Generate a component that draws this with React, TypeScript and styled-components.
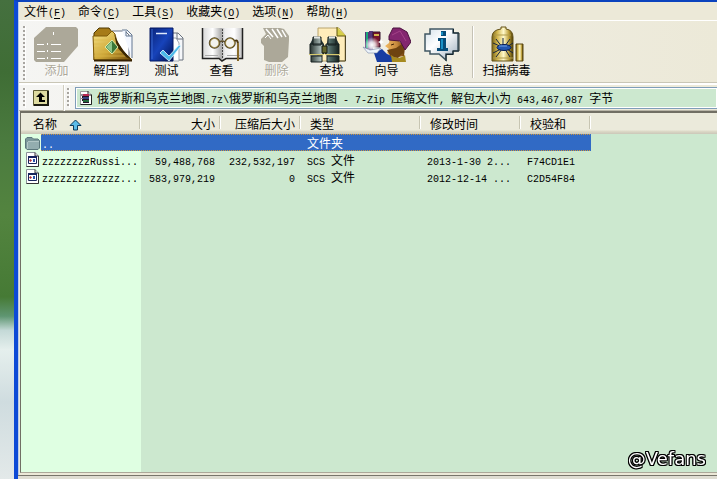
import React, { Fragment } from "react";
import styled, { createGlobalStyle, css } from "styled-components";

const GlobalStyle = createGlobalStyle`
  * { box-sizing: border-box; }
  html, body { margin: 0; height: 100%; overflow: hidden; }
  body {
    font: 12px/16px "Noto Sans CJK SC", sans-serif;
    color: #000;
    cursor: default;
  }
  button { font: inherit; color: inherit; background: none; border: 0; padding: 0; margin: 0; }
`;

/* Half-width characters take half the width of a full-width one. */
const HalfWidth = styled.span`
  font-family: "Liberation Mono", monospace;
  font-size: 10px;
  line-height: 10px;
  white-space: pre;
`;

function Mixed({ text }: { text: string }) {
  return (
    <>
      {text.split(/([\x20-\x7e]+)/).map((part, i) =>
        i % 2 ? <HalfWidth key={i}>{part}</HalfWidth> : <Fragment key={i}>{part}</Fragment>
      )}
    </>
  );
}

const Screen = styled.div`
  display: flex;
  height: 100vh;
  background: linear-gradient(
    to bottom,
    #45703f 0,
    #3f6d35 15%,
    #4b7b3f 30%,
    #53843f 45%,
    #467a35 62%,
    #5f9672 66%,
    #c4d9d7 69%,
    #e5efed 73%,
    #cfdcdf 84%,
    #e3e9e9 100%
  );
`;

const Window = styled.main`
  flex: 1;
  min-width: 0;
  margin-left: 14px;
  display: flex;
  flex-direction: column;
  background: #ece9d8;
  border-left: 4px solid #0d4ad6;
  border-top: 2px solid #0b43be;
  box-shadow: inset 1px 0 #b8cbea;
`;

const MenuBar = styled.nav`
  display: flex;
  gap: 12px;
  height: 19px;
  padding: 1px 5px 2px;
  margin-left: 1px;
  border-bottom: 1px solid #fff;
`;

const MenuItem = styled.button`
  white-space: nowrap;
  line-height: 16px;
`;

const Key = styled.u`
  text-underline-offset: 2px;
`;

const Toolbar = styled.div`
  display: flex;
  align-items: flex-start;
  height: 62px;
  padding: 5px 4px 0;
  margin-left: 1px;
  background: linear-gradient(to right, #f5f5f3, #f0eee4 50%, #ece9d8);
  border-bottom: 1px solid #c9c6b6;
`;

const Grip = styled.span<{ $height: number }>`
  width: 3px;
  height: ${(p) => p.$height}px;
  flex: none;
  background: repeating-linear-gradient(to bottom, #a8a5a0 0 2px, transparent 2px 4px);
  border-right: 1px solid #fff;
`;

const Tools = styled.div`
  display: flex;
  margin-left: 3px;
`;

const ToolButton = styled.button<{ $wide?: boolean }>`
  width: ${(p) => (p.$wide ? 59 : 55)}px;
  display: flex;
  flex-direction: column;
  align-items: center;
  white-space: nowrap;
  line-height: 14px;
  &:disabled {
    color: #aca899;
    text-shadow: 1px 1px #fff;
  }
`;

const Separator = styled.span`
  width: 2px;
  height: 52px;
  margin: 0 3px;
  background: #c5c2b5;
  border-right: 1px solid #fff;
`;

const AddressBar = styled.div`
  display: flex;
  align-items: center;
  height: 28px;
  padding-left: 4px;
  margin-left: 1px;
  background: linear-gradient(to right, #f5f5f3, #ece9d8);
  border-top: 2px solid #fff;
  border-bottom: 1px solid #b9b6a8;
`;

const UpButton = styled.button`
  width: 16px;
  height: 16px;
  margin: 0 14px 0 7px;
  svg { display: block; }
`;

const BarEdge = styled.span`
  width: 2px;
  height: 26px;
  margin-right: 2px;
  background: #d1cec0;
  border-right: 1px solid #fff;
`;

const Address = styled.button`
  flex: 1;
  min-width: 0;
  display: flex;
  align-items: center;
  gap: 4px;
  height: 22px;
  margin-left: 5px;
  padding-left: 3px;
  border: 1px solid #7f9db9;
  border-right: 0;
  background: #cce8cf;
  box-shadow: inset 0 0 0 1px #fff;
  text-align: left;
  white-space: nowrap;
  svg { flex: none; }
`;

const FileList = styled.section`
  flex: 1;
  min-height: 0;
  margin: 0 0 2px 2px;
  border: 1px solid #716f64;
  border-width: 2px 0 1px 1px;
  border-bottom-color: #aca899;
  background: linear-gradient(to right, #dfffe2 120px, #cce8cf 120px);
`;

const Status = styled.footer`
  height: 4px;
  border-top: 1px solid #77756a;
  background: #dfddd2;
`;

const Table = styled.table`
  width: 100%;
  table-layout: fixed;
  border-spacing: 0;
`;

const Column = styled.col<{ $width?: number }>`
  ${(p) => p.$width && css`width: ${p.$width}px;`}
`;

const HeaderRow = styled.tr`
  height: 21px;
  background: linear-gradient(to bottom, #ebeadb 17px, #dedbc9 18px, #cbc7b8);
`;

const HeaderCell = styled.th<{ $right?: boolean; $last?: boolean; $first?: boolean }>`
  padding: 0 ${(p) => (p.$right ? 6 : 2)}px 0 ${(p) => (p.$right ? 2 : p.$first ? 12 : 9)}px;
  font-weight: 400;
  line-height: 18px;
  white-space: nowrap;
  text-align: ${(p) => (p.$right ? "right" : "left")};
  ${(p) =>
    !p.$last &&
    css`
      background: linear-gradient(#c7c5b2, #c7c5b2) right 1px top 3px / 1px 13px no-repeat,
        linear-gradient(#fff, #fff) right 0 top 3px / 1px 13px no-repeat;
    `}
  svg { margin-left: 12px; vertical-align: -2px; }
`;

const dots = "repeating-linear-gradient(to right, #ce953a 0 1px, #316ac5 1px 2px)";

const selectedCell = css`
  color: #fff;
  background: ${dots} left top / 100% 1px no-repeat, ${dots} left bottom / 100% 1px no-repeat, #316ac5;
`;

const Row = styled.tr`
  height: 17px;
`;

const Cell = styled.td<{ $right?: boolean; $selected?: boolean }>`
  padding: 0 6px;
  height: 17px;
  line-height: 17px;
  white-space: nowrap;
  text-align: ${(p) => (p.$right ? "right" : "left")};
  ${(p) => p.$selected && selectedCell}
`;

const NameCell = styled.td`
  padding: 0;
`;

const NameBox = styled.div`
  display: flex;
  height: 17px;
  align-items: center;
  svg { flex: none; margin: 0 1px 0 4px; }
`;

const NameText = styled.span<{ $selected?: boolean }>`
  flex: 1;
  height: 17px;
  line-height: 17px;
  padding-left: 1px;
  overflow: hidden;
  white-space: nowrap;
  ${(p) => p.$selected && selectedCell}
`;

const Watermark = styled.span`
  position: fixed;
  right: 11px;
  bottom: 10px;
  color: #fff;
  font: 18px/20px "DejaVu Sans", sans-serif;
  text-shadow: 1px 0 #000, -1px 0 #000, 0 1px #000, 0 -1px #000, 1px 1px #000, -1px -1px #000,
    1px -1px #000, -1px 1px #000;
`;

const Art = ({ children }: { children: React.ReactNode }) => (
  <svg width="49" height="37" viewBox="0 0 49 37" aria-hidden="true">
    {children}
  </svg>
);

const AddIcon = () => (
  <Art>
    <path d="M14 1H44L46 3V20L39 28 32 36H4L2 34V12Z" fill="#aca899" />
    <path d="M5 18.500h7M19 18.500h10M5 25.500h8M19 25.500h10M5 32.500h8M19 32.500h10" stroke="#fff" />
    <path d="M15 17h1v2h-1zM15 24h1v2h-1zM15 31h1v2h-1zM21 6h1v3h-1z" fill="#fff" />
  </Art>
);

const ExtractIcon = () => (
  <Art>
    <defs>
      <linearGradient id="folder" x2="1" y2="1">
        <stop offset="0" stopColor="#f8e58a" />
        <stop offset=".55" stopColor="#cda638" />
        <stop offset="1" stopColor="#6d4808" />
      </linearGradient>
    </defs>
    <path d="M7 7 12 2H22L25 6H37V34H7Z" fill="#a67b18" stroke="#4f3900" />
    <path d="M25 5H38L42 9V32H25Z" fill="#fff" stroke="#667084" />
    <path d="M35 4H40L45 9V32M39 5v5h6" fill="#f3f7ff" stroke="#637691" />
    <path d="M6 10H20L25 5 28 8 30 16 35 24 45 34H7Z" fill="url(#folder)" stroke="#7f5a08" />
    <path d="M7 14h20M7 18h22M7 22h24M7 26h28M7 30h32" stroke="#ddb94b" opacity=".7" />
    <path d="M27 7C30 16 36 25 45 34L39 31 30 21Z" fill="#3b2703" />
    <path d="M7 34.500H45" stroke="#352000" strokeWidth="2" />
    <path d="M25 14 31 21 25 28 18 21Z" fill="#397738" stroke="#dce9a7" />
    <path d="M25 15v12l-6-6Z" fill="#8cc48b" />
  </Art>
);

const TestIcon = () => (
  <Art>
    <defs>
      <linearGradient id="book" x2="1" y2="1">
        <stop offset="0" stopColor="#0a2378" />
        <stop offset=".5" stopColor="#1743ba" />
        <stop offset="1" stopColor="#001050" />
      </linearGradient>
    </defs>
    <path d="M24 7H36L41 12V34H24Z" fill="#f5f7fa" stroke="#68717d" />
    <path d="M23 12H34L37 17V35H23Z" fill="#fff" stroke="#a0a8b4" />
    <path d="M35 7v6h6" fill="none" stroke="#68717d" />
    <path d="M8 2H31V35H8Z" fill="url(#book)" stroke="#041862" />
    <path d="M10 3v30" stroke="#3968d1" />
    <path d="M14 7.500h11" stroke="#dfe9fc" strokeWidth="1.500" />
    <path d="m18 27 3-3 6 6L37 19l2 1-12 15Z" fill="#4bb9e9" stroke="#e8faff" strokeWidth=".8" />
  </Art>
);

const ViewIcon = () => (
  <Art>
    <defs>
      <linearGradient id="page">
        <stop offset="0" stopColor="#d9d9d9" />
        <stop offset=".25" stopColor="#fff" />
        <stop offset=".47" stopColor="#aaa" />
        <stop offset=".56" stopColor="#ededed" />
        <stop offset=".8" stopColor="#fff" />
        <stop offset="1" stopColor="#c4c4c4" />
      </linearGradient>
    </defs>
    <path d="M6 2H45V32H28L25 34 22 32H6Z" fill="url(#page)" />
    <path d="M5.500 2V32.500H22L25 35 29 32.500H45.500V2" fill="none" stroke="#222" strokeWidth="1.500" />
    <path d="M25.500 3v30" stroke="#444" strokeDasharray="2 1" />
    <path d="M8 29.500h13M30 29.500h13" stroke="#aaa" />
    <path d="M23 16q2-2 5 0" fill="none" stroke="#5d4e29" strokeWidth="1.500" />
    <circle cx="17.500" cy="17" r="5" fill="#f2f2ed" stroke="#4c4120" strokeWidth="1.500" />
    <circle cx="33" cy="17" r="5" fill="#f2f2ed" stroke="#4c4120" strokeWidth="1.500" />
    <circle cx="17.500" cy="17" r="4.500" fill="none" stroke="#c0a554" strokeWidth=".7" />
    <circle cx="33" cy="17" r="4.500" fill="none" stroke="#c0a554" strokeWidth=".7" />
    <path d="M38 15q3-2 3 4v16" fill="none" stroke="#49340c" strokeWidth="2" />
    <path d="M41 17v18" stroke="#c9a34c" />
  </Art>
);

const DeleteIcon = () => (
  <Art>
    <path d="M9 13 14 8 11 2H28L32 3 37 10 37 14 36 31 30 36H17L12 34V20L9 17Z" fill="#aca899" />
    <path d="m14 3 7 8M20 3l6 9M25 3l5 8M30 4l4 7" stroke="#fff" strokeWidth="1.500" />
    <path d="M13 12l3-3 3 4" fill="none" stroke="#fff" />
  </Art>
);

const FindIcon = () => (
  <Art>
    <defs>
      <linearGradient id="barrel">
        <stop offset="0" stopColor="#27332f" />
        <stop offset=".4" stopColor="#b5c6c3" />
        <stop offset=".7" stopColor="#4e6864" />
        <stop offset="1" stopColor="#14201e" />
      </linearGradient>
    </defs>
    <path d="M11 2H32L38 9V35H11Z" fill="#ffedbb" stroke="#b9a46e" />
    <path d="M30 1v9h9" fill="#d6ce49" stroke="#605710" />
    <path d="M38.500 10v25h-9" fill="none" stroke="#514829" />
    <path d="M6 12h7l4 6v10H3V18ZM21 12h8l3 6v10H18Z" fill="#293838" />
    <path d="M6 11h8v8H6zM21 11h8v8h-8zM3 18h13v11H3zM19 18h13v11H19zM4 30h11v6H4zM20 30h12v6H20z" fill="url(#barrel)" stroke="#172020" />
    <path d="M7 11.500h6M22 11.500h6" stroke="#e2e6e4" strokeWidth="2" />
    <path d="M2 28.500h15M18 28.500h15" stroke="#d6ca6e" />
    <path d="M15 20h5v7h-5z" fill="#65662b" stroke="#171b16" />
  </Art>
);

const WizardIcon = () => (
  <Art>
    <defs>
      <radialGradient id="glow">
        <stop offset="0" stopColor="#fff" />
        <stop offset=".4" stopColor="#fff" stopOpacity=".8" />
        <stop offset="1" stopColor="#fff" stopOpacity="0" />
      </radialGradient>
      <linearGradient id="face">
        <stop offset="0" stopColor="#f4ba61" />
        <stop offset=".6" stopColor="#c5883c" />
        <stop offset="1" stopColor="#673806" />
      </linearGradient>
    </defs>
    <path d="M3 6h4v17H3zM7 5h4v19H7z" fill="#563578" />
    <path d="M4 6h2v16H4z" fill="#1aa77a" />
    <path d="M11 6h7v15h-7z" fill="#77142c" stroke="#33122c" />
    <path d="M12 9h5" stroke="#d4b54e" strokeWidth="2" />
    <circle cx="10" cy="19" r="8" fill="url(#glow)" />
    <path d="M12 27 20 23 25 28 31 30V36H15Z" fill="#173da2" />
    <path d="M1 21 8 24 19 22 15 27H6Z" fill="#edf4fb" stroke="#7b8aa7" strokeWidth=".6" />
    <path d="M28 12 36 14 43 21 42 30 31 32 25 27 27 23 23 20 27 17Z" fill="url(#face)" />
    <path d="m25 24 9-2 6-4 2 8-6 6-7-1Z" fill="#6e4310" />
    <path d="M29 29q7 6 14 0l1 7H30Z" fill="#a68a20" />
    <path d="M27 10 31 2 38 2 45 6 49 16 43 24 38 15 27 14Z" fill="#83266f" stroke="#4b123f" />
    <path d="m30 9 8-4 6 10" fill="none" stroke="#a44288" />
    <path d="M29 19l3-1" stroke="#402306" />
    <path d="m18 15 1-2 1 2 2 1-2 1-1 2-1-2-2-1Z" fill="#fff" />
  </Art>
);

const InfoIcon = () => (
  <Art>
    <defs>
      <linearGradient id="bubble" x2="1" y2="1">
        <stop offset="0" stopColor="#d3e0e9" />
        <stop offset=".4" stopColor="#fff" />
        <stop offset="1" stopColor="#9badbe" />
      </linearGradient>
    </defs>
    <path d="M13 3H36V7H41V25H36V28H29V34L22 28H13V25H8V8H13Z" fill="url(#bubble)" stroke="#405763" strokeWidth="1.500" />
    <path d="M36.500 3v4H42v18h-6v3.500h-7V35" fill="none" stroke="#14242d" />
    <path d="M24 5h5v5h-5zM21 12h8v10h2v3H20v-3h3v-7h-2z" fill="#084d79" />
    <path d="M24 6h2v3h-2zM24 13h2v10h-2z" fill="#1b91c6" />
  </Art>
);

const VirusIcon = () => (
  <Art>
    <defs>
      <linearGradient id="tank">
        <stop offset="0" stopColor="#7a6518" />
        <stop offset=".25" stopColor="#d2b64d" />
        <stop offset=".55" stopColor="#fff9cb" />
        <stop offset=".8" stopColor="#bfa13c" />
        <stop offset="1" stopColor="#493900" />
      </linearGradient>
    </defs>
    <path d="M19 3V1h5v2q7 1 7 8v24H10V11q0-7 9-8Z" fill="url(#tank)" stroke="#655319" />
    <path d="M34 18h7v17h-7z" fill="url(#tank)" stroke="#5a4610" />
    <path d="M12 9h17M11 32h20" stroke="#b19c4c" />
    <path d="m14 13 6 8M21 12v9M28 13l-5 7M11 17l9 4M31 17l-6 4M11 27l8-4M14 31l6-8M28 31l-5-8M31 27l-6-4" stroke="#15233f" />
    <ellipse cx="22" cy="21.500" rx="7" ry="3" fill="#2456af" stroke="#071c54" />
    <path d="M17 20h8" stroke="#72a1e5" />
  </Art>
);

const ArchiveIcon = () => (
  <svg width="14" height="16" viewBox="0 0 14 16" aria-hidden="true">
    <path d="M1.500 1.500H9L12.500 5V14.500H1.500Z" fill="#fff" stroke="#999" />
    <path d="M12.500 5v9.500h-11M9 1v4h4" fill="none" stroke="#222" />
    <path d="M4 4h6v2H4z" fill="#b82852" />
    <path d="M4 7h6v2H4z" fill="#34437e" />
    <path d="M4 10h6v2H4z" fill="#256b3d" />
    <path d="M3 4v2l1 1-1 1v1l1 1-1 1M4 6.500h6M4 9.500h6M4 12.500h6" fill="none" stroke="#241326" />
  </svg>
);

const UpIcon = () => (
  <svg width="16" height="16" viewBox="0 0 16 16" aria-hidden="true">
    <path d="M.5.5h15v15H.5Z" fill="#dedba0" stroke="#5c5a34" />
    <path d="M1 15h14V1" fill="none" stroke="#1b1b10" strokeWidth="2" />
    <path d="M7.500 2.500 12 7H9v3h3v2H6V7H3Z" fill="#000" />
  </svg>
);

const SortIcon = () => (
  <svg width="13" height="12" viewBox="0 0 13 12" aria-label="升序" role="img">
    <path d="M6.500 1 12 6.500H8.500V11h-4V6.500H1Z" fill="#5bbce8" stroke="#0b3a5c" />
  </svg>
);

const FolderIcon = () => (
  <svg width="15" height="16" viewBox="0 0 15 16" aria-hidden="true">
    <path d="M.5 4 2 2.500h5L8.500 4H13l1.500 1.500V13L13 14.500H2L.5 13Z" fill="#7b979a" stroke="#5c777c" />
    <path d="M3 6.500h11V13l-1 1H3Z" fill="#93adaf" />
    <path d="M3 6.500h11M2.500 7v7" stroke="#b0c5c5" />
  </svg>
);

const ScsIcon = () => (
  <svg width="15" height="16" viewBox="0 0 15 16" aria-hidden="true">
    <path d="M1.500.5H10L13.500 4v10.500h-12Z" fill="#fff" stroke="#8b9399" />
    <path d="M10 .5V4h3.500v10.500h-12" fill="none" stroke="#333" />
    <path d="M3.500 4.500h8v7h-8Z" fill="#fff" stroke="#17245c" />
    <path d="M3 4h9v2H3Z" fill="#17245c" />
    <path d="m5.500 7 1.500 1.500L5.500 10 4 8.500Z" fill="#b0303d" />
    <path d="M8 7h2v3H8Z" fill="#2b55aa" />
  </svg>
);

const menus = [
  ["文件", "F"],
  ["命令", "C"],
  ["工具", "S"],
  ["收藏夹", "O"],
  ["选项", "N"],
  ["帮助", "H"],
];

const tools = [
  { label: "添加", Icon: AddIcon, disabled: true },
  { label: "解压到", Icon: ExtractIcon },
  { label: "测试", Icon: TestIcon },
  { label: "查看", Icon: ViewIcon },
  { label: "删除", Icon: DeleteIcon, disabled: true },
  { label: "查找", Icon: FindIcon },
  { label: "向导", Icon: WizardIcon },
  { label: "信息", Icon: InfoIcon },
];

const columns = [
  { label: "名称", width: 120 },
  { label: "大小", width: 80, right: true },
  { label: "压缩后大小", width: 80, right: true },
  { label: "类型", width: 120 },
  { label: "修改时间", width: 100 },
  { label: "校验和", width: 70 },
];

const files = [
  { name: "..", cells: ["", "", "文件夹", "", ""], folder: true, selected: true },
  { name: "zzzzzzzzRussi...", cells: ["59,488,768", "232,532,197", "SCS 文件", "2013-1-30 2...", "F74CD1E1"] },
  { name: "zzzzzzzzzzzzz...", cells: ["583,979,219", "0", "SCS 文件", "2012-12-14 ...", "C2D54F84"] },
];

export default function App() {
  return (
    <>
      <GlobalStyle />
      <Screen>
        <Window>
          <MenuBar>
            {menus.map(([label, key]) => (
              <MenuItem key={key}>
                {label}
                <HalfWidth>
                  (<Key>{key}</Key>)
                </HalfWidth>
              </MenuItem>
            ))}
          </MenuBar>
          <Toolbar>
            <Grip $height={54} />
            <Tools>
              {tools.map(({ label, Icon, disabled }) => (
                <ToolButton key={label} disabled={disabled}>
                  <Icon />
                  {label}
                </ToolButton>
              ))}
              <Separator />
              <ToolButton $wide>
                <VirusIcon />
                扫描病毒
              </ToolButton>
            </Tools>
          </Toolbar>
          <AddressBar>
            <Grip $height={20} />
            <UpButton aria-label="向上">
              <UpIcon />
            </UpButton>
            <BarEdge />
            <Grip $height={20} />
            <Address aria-haspopup="listbox">
              <ArchiveIcon />
              <span>
                <Mixed text="俄罗斯和乌克兰地图.7z\俄罗斯和乌克兰地图 - 7-Zip 压缩文件, 解包大小为 643,467,987 字节" />
              </span>
            </Address>
          </AddressBar>
          <FileList>
            <Table>
              <colgroup>
                {columns.map((c) => (
                  <Column key={c.label} $width={c.width} />
                ))}
                <Column />
              </colgroup>
              <thead>
                <HeaderRow>
                  {columns.map((c, i) => (
                    <HeaderCell key={c.label} $right={c.right} $first={i === 0}>
                      {c.label}
                      {i === 0 && <SortIcon />}
                    </HeaderCell>
                  ))}
                  <HeaderCell $last />
                </HeaderRow>
              </thead>
              <tbody>
                {files.map((f) => (
                  <Row key={f.name}>
                    <NameCell>
                      <NameBox>
                        {f.folder ? <FolderIcon /> : <ScsIcon />}
                        <NameText $selected={f.selected}>
                          <Mixed text={f.name} />
                        </NameText>
                      </NameBox>
                    </NameCell>
                    {f.cells.map((text, i) => (
                      <Cell key={i} $right={i < 2} $selected={f.selected}>
                        <Mixed text={text} />
                      </Cell>
                    ))}
                    <td />
                  </Row>
                ))}
              </tbody>
            </Table>
          </FileList>
          <Status />
        </Window>
        <Watermark>@Vefans</Watermark>
      </Screen>
    </>
  );
}
